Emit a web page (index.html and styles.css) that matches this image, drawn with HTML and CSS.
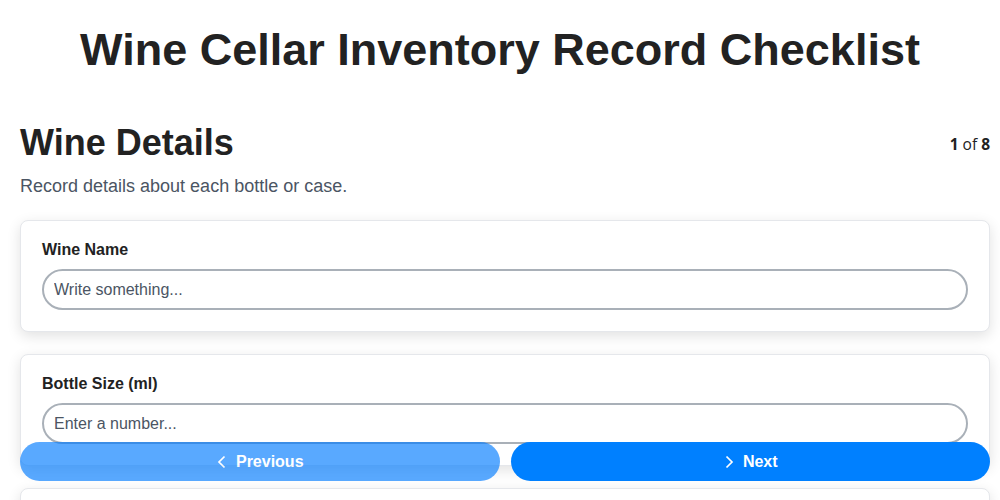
FILE: index.html
```html
<!DOCTYPE html>
<html lang="en">

<head>
    <meta charset="UTF-8" />
    <meta name="viewport" content="width=device-width, initial-scale=1.0" />
    <title>Wine Cellar Inventory Record Checklist</title>
    <link rel="stylesheet" href="styles.css">
</head>

<body>
    <h1 class="page-title">Wine Cellar Inventory Record Checklist</h1>

    <div class="form">
        <div class="step-header">
            <h2>Wine Details</h2>
            <span class="step-count"><b>1</b> of <b>8</b></span>
        </div>
        <p class="step-desc">Record details about each bottle or case.</p>

        <div class="card">
            <label for="wine-name">Wine Name</label>
            <input type="text" id="wine-name" placeholder="Write something..." />
        </div>

        <div class="card">
            <label for="bottle-size">Bottle Size (ml)</label>
            <input type="number" id="bottle-size" placeholder="Enter a number..." />
        </div>

        <div class="card">
            <label for="vintage">Vintage Year</label>
            <input type="number" id="vintage" placeholder="Enter a number..." />
        </div>

        <div class="card">
            <label for="producer">Producer</label>
            <input type="text" id="producer" placeholder="Write something..." />
        </div>
    </div>

    <div class="nav-buttons">
        <button class="btn btn-prev" disabled>
            <svg width="12" height="14" viewBox="0 0 12 14"><polyline points="8.5,1.5 3,7 8.5,12.5" fill="none" stroke="#fff" stroke-width="1.7" /></svg>
            Previous
        </button>
        <button class="btn btn-next">
            <svg width="12" height="14" viewBox="0 0 12 14"><polyline points="3.5,1.5 9,7 3.5,12.5" fill="none" stroke="#fff" stroke-width="1.7" /></svg>
            Next
        </button>
    </div>
</body>

</html>
```

FILE: styles.css
```css
* {
    box-sizing: border-box;
}

body {
    margin: 0;
    background-color: #fff;
    font-family: 'Liberation Sans', Arial, Helvetica, sans-serif;
    color: #222;
}

.page-title {
    font-size: 45px;
    text-align: center;
    margin: 24px 0 46px;
}

.form {
    padding: 0 10px 120px 20px;
}

.step-header {
    display: flex;
    justify-content: space-between;
    align-items: center;
}

.step-header h2 {
    font-size: 36px;
    margin: 0;
}

.step-count {
    font-family: 'Open Sans', sans-serif;
    font-size: 15.5px;
    padding-top: 2px;
}

.step-desc {
    font-size: 18px;
    color: #4b5563;
    margin: 12px 0 23px;
}

.card {
    background-color: #fff;
    border: 1px solid #e5e7eb;
    border-radius: 8px;
    box-shadow: 0 4px 14px rgba(0, 0, 0, 0.12);
    padding: 20px 21px 21px;
    margin-bottom: 22px;
}

.card label {
    display: block;
    font-size: 16px;
    font-weight: bold;
    margin-bottom: 10px;
}

.card input {
    display: block;
    width: 100%;
    height: 41px;
    padding: 0 10px;
    border: 2px solid #a9b0b8;
    border-radius: 999px;
    font-family: inherit;
    font-size: 16px;
    color: #222;
    background-color: #fff;
    outline: none;
}

.card input::placeholder {
    color: #4b5563;
    opacity: 1;
}

.nav-buttons {
    position: fixed;
    left: 20px;
    right: 10px;
    bottom: 19px;
    display: grid;
    grid-template-columns: 1fr 1fr;
    gap: 11px;
}

.btn {
    height: 39px;
    display: flex;
    align-items: center;
    justify-content: center;
    gap: 8px;
    border: none;
    border-radius: 999px;
    background-color: #0080ff;
    color: #fff;
    font-family: inherit;
    font-size: 16px;
    font-weight: bold;
    cursor: pointer;
}

.btn:disabled {
    background-color: #007bff;
    opacity: 0.65;
    cursor: not-allowed;
}
```
